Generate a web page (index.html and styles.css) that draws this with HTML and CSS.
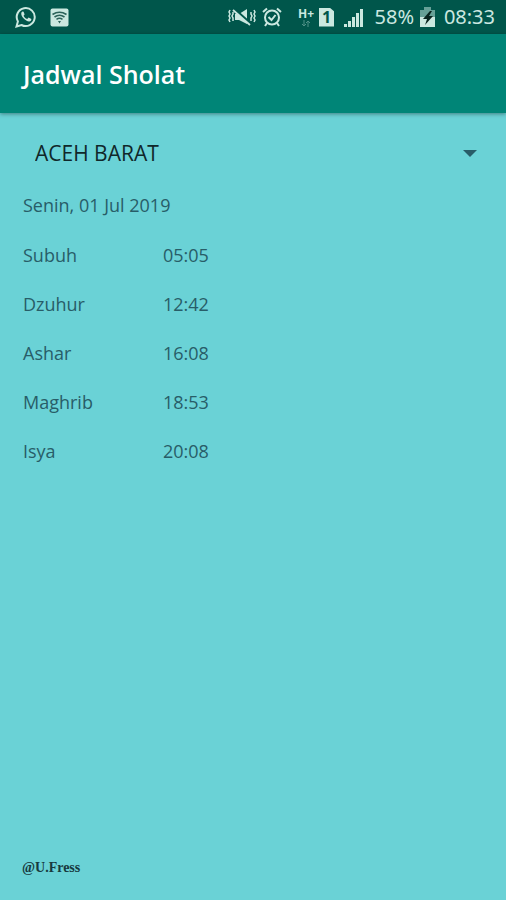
FILE: index.html
```html
<!DOCTYPE html>
<html lang="id">
<head>
    <meta charset="UTF-8">
    <meta name="viewport" content="width=device-width, initial-scale=1.0">
    <title>Jadwal Sholat</title>
    <link rel="stylesheet" href="styles.css">
</head>
<body>
    <div class="statusbar">
        <div class="notif">
            <svg width="22" height="22" viewBox="0 0 22 22" fill="none" stroke="currentColor">
                <path d="M1.5 20.5l1.4-5A9 9 0 1 1 6.500 19z" stroke-width="2"/>
                <path d="M7.500 5.500c-2 1-1.500 4 1 6.800s6 4.400 7.600 2.200l.3-1.500-2.800-1.400-1.400 1.500c-1.800-.6-3-2-3.600-3.400l1-1.300-1-2.700z" fill="currentColor" stroke="none"/>
            </svg>
            <svg width="19" height="19" viewBox="0 0 19 19">
                <rect x="0.500" y="0.500" width="18" height="18" rx="2" fill="currentColor"/>
                <g fill="none" stroke="#2b6259" stroke-width="1.600">
                    <path d="M2.500 6.500q7-4.500 14 0M4.500 9q5-3.500 10 0M6.500 11.300q3-2 6 0"/>
                    <path d="M8 13h3l-1.500 2.500z" fill="#2b6259" stroke="none"/>
                </g>
            </svg>
        </div>
        <div class="system">
            <svg class="mute" width="28" height="20" viewBox="0 0 28 20" fill="none" stroke="currentColor" stroke-width="1.500">
                <path d="M2 3l-1 2 1 2-1 2 1 2-1 2 1 2M5 5v2l-1 2 1 2v3M26 3l1 2-1 2 1 2-1 2 1 2-1 2M23 5v2l1 2-1 2v3"/>
                <path d="M7 7h4l8-5v15l-8-4H7z" fill="currentColor" stroke="none"/>
                <path d="M6 2l17 15" stroke="#00564b" stroke-width="3"/>
                <path d="M5 3l17 15" stroke-width="1.800"/>
            </svg>
            <svg class="alarm" width="20" height="20" viewBox="0 0 20 20" fill="none" stroke="currentColor" stroke-width="2">
                <circle cx="10" cy="10.500" r="7"/>
                <path d="M1 5l4-3.500M19 5l-4-3.500M5 16l-2 3M15 16l2 3M6.500 10l3 3 4-5"/>
            </svg>
            <div class="network">
                <span>H+</span>
                <svg width="10" height="7" viewBox="0 0 10 7" fill="none" stroke="#4f9188">
                    <path d="M3 0v6M1 4l2 2 2-2M7 7V1M5 3l2-2 2 2"/>
                </svg>
            </div>
            <span class="sim">1</span>
            <svg class="signal" width="20" height="19" viewBox="0 0 20 19" fill="currentColor">
                <path d="M0 16h3v3H0zM4 13h3v6H4zM8 9h3v10H8zM12 5h3v14h-3zM16 1h3v18h-3z"/>
            </svg>
            <span class="percent">58%</span>
            <svg class="battery" width="15" height="20" viewBox="0 0 15 20">
                <path d="M4 0h7v3h4v8H0V3h4z" fill="#66a097"/>
                <path d="M0 10h15v10H0z" fill="currentColor"/>
                <path d="M10 4l-7 8h4l-2 6 8-9H9l3-5z" fill="#08241f"/>
            </svg>
            <span class="clock">08:33</span>
        </div>
    </div>
    <header class="toolbar">
        <h1>Jadwal Sholat</h1>
    </header>
    <main class="content">
        <div class="spinner">
            <select id="kota" aria-label="Kota">
                <option>ACEH BARAT</option>
            </select>
            <span class="arrow"></span>
        </div>
        <p class="tanggal">Senin, 01 Jul 2019</p>
        <table class="jadwal">
            <tr><th scope="row">Subuh</th><td>05:05</td></tr>
            <tr><th scope="row">Dzuhur</th><td>12:42</td></tr>
            <tr><th scope="row">Ashar</th><td>16:08</td></tr>
            <tr><th scope="row">Maghrib</th><td>18:53</td></tr>
            <tr><th scope="row">Isya</th><td>20:08</td></tr>
        </table>
    </main>
    <footer class="footer">@U.Fress</footer>
</body>
</html>
```

FILE: styles.css
```css
* {
    box-sizing: border-box;
}
body {
    margin: 0;
    min-height: 100vh;
    display: flex;
    flex-direction: column;
    background-color: #6ad2d6;
    color: #285d68;
    font-family: "Open Sans", sans-serif;
    font-size: 18px;
}
svg {
    display: block;
    flex: none;
}

/* status bar */
.statusbar {
    display: flex;
    justify-content: space-between;
    align-items: center;
    height: 34px;
    padding: 0 11px 0 15px;
    background-color: #00564b;
    color: #cbe8e0;
}
.notif,
.system {
    display: flex;
    align-items: center;
}
.notif {
    gap: 13px;
}
.mute {
    margin-right: 6px;
}
.alarm {
    margin-right: 16px;
}
.network {
    display: flex;
    flex-direction: column;
    align-items: center;
    width: 16px;
    margin-right: 5px;
    font-size: 12px;
    font-weight: bold;
    line-height: 12px;
}
.sim {
    width: 15px;
    margin-right: 10px;
    background-color: #cbe8e0;
    color: #00564b;
    font-size: 16px;
    font-weight: bold;
    line-height: 19px;
    text-align: center;
    clip-path: polygon(0 0, 70% 0, 100% 20%, 100% 100%, 0 100%);
}
.signal {
    margin-right: 9px;
}
.percent,
.clock {
    font-family: "Noto Sans", sans-serif;
    font-size: 20px;
    line-height: 24px;
    text-align: right;
}
.percent {
    width: 41px;
    margin-right: 6px;
}
.clock {
    width: 60px;
}

/* toolbar */
.toolbar {
    display: flex;
    align-items: center;
    height: 79px;
    padding: 0 23px;
    background-color: #008577;
    color: #fff;
    box-shadow: 0 1px 4px rgba(0, 0, 0, 0.4);
}
.toolbar h1 {
    margin: 0;
    font-size: 25px;
    font-weight: 600;
    line-height: 32px;
}

/* content */
.content {
    flex: 1;
    padding: 12px 23px;
}
.spinner {
    display: grid;
    align-items: center;
    height: 56px;
}
.spinner select,
.arrow {
    grid-area: 1 / 1;
}
.spinner select {
    appearance: none;
    width: 100%;
    height: 56px;
    padding: 0 40px 0 12px;
    border: none;
    background: none;
    color: #10272a;
    font-family: inherit;
    font-size: 21px;
}
.arrow {
    justify-self: end;
    margin-right: 6px;
    border-top: 7px solid #285d68;
    border-left: 7px solid transparent;
    border-right: 7px solid transparent;
    pointer-events: none;
}
.tanggal {
    margin: 0;
    line-height: 49px;
}
.jadwal {
    border-collapse: collapse;
}
.jadwal th,
.jadwal td {
    height: 49px;
    padding: 0;
    font-weight: normal;
    text-align: left;
}
.jadwal th {
    width: 140px;
}

/* footer */
.footer {
    padding: 0 22px 24px;
    color: #173a3e;
    font-family: "Liberation Serif", serif;
    font-size: 14px;
    font-weight: bold;
    line-height: 16px;
}
```
